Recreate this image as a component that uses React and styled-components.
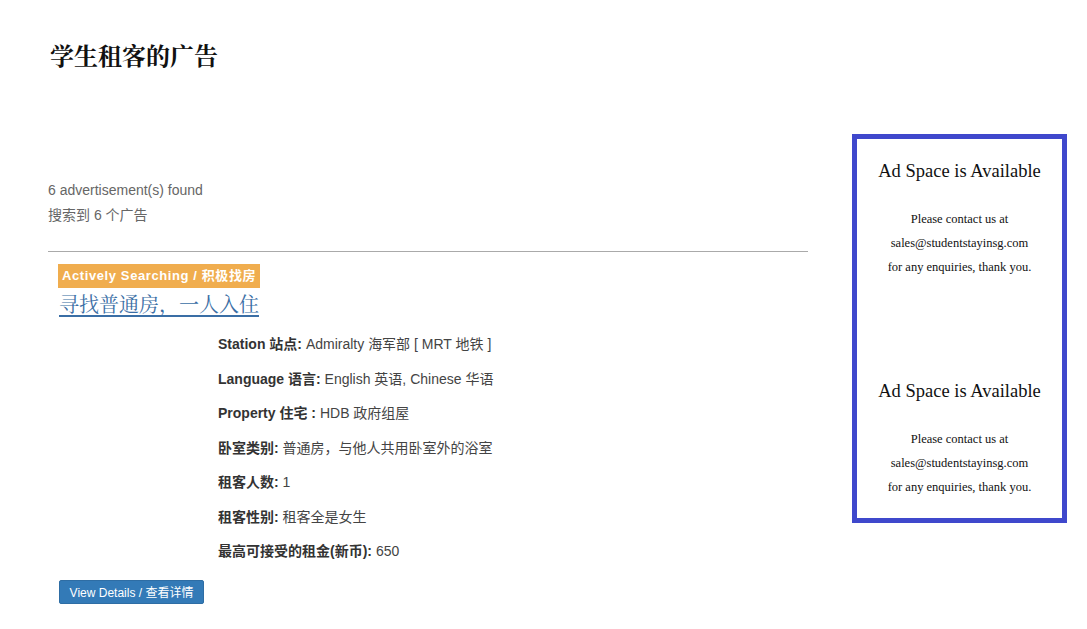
import React from "react";
import styled, { createGlobalStyle } from "styled-components";

const GlobalStyle = createGlobalStyle`
  body {
    margin: 0;
    background: #fff;
    font-family: "Liberation Sans", "Noto Sans CJK SC", sans-serif;
    color: #333;
  }
`;

const Page = styled.div`
  padding: 0 20px 0 48px;
`;

const PageTitle = styled.h1`
  margin: 40px 0 0 2px;
  font-family: "Noto Serif CJK SC", "Liberation Serif", "Noto Sans CJK SC", serif;
  font-size: 24px;
  line-height: 30px;
  font-weight: bold;
  color: #111;
`;

const Row = styled.div`
  display: flex;
  align-items: flex-start;
  margin-top: 64px;
`;

const Main = styled.main`
  width: 760px;
  padding-top: 44px;
`;

const Found = styled.div`
  font-size: 14px;
  line-height: 25px;
  color: #666;
`;

const Divider = styled.hr`
  margin: 23px 0 0;
  border: 0;
  border-top: 1px solid #aaa;
`;

const Listing = styled.article`
  padding: 12px 0 0 10px;
`;

const Badge = styled.span`
  display: inline-block;
  background: #f0ad4e;
  color: #fff;
  font-size: 13px;
  font-weight: bold;
  letter-spacing: 0.6px;
  line-height: 24px;
  padding: 0 4px;
`;

const ListingTitle = styled.a`
  display: block;
  width: max-content;
  margin-left: 1px;
  font-family: "Noto Serif CJK SC", "Liberation Serif", "Noto Sans CJK SC", serif;
  font-size: 20px;
  line-height: 32px;
  color: #3a6ea5;
  text-decoration: underline;
  text-underline-offset: 3px;
`;

const Details = styled.div`
  margin: 14px 0 0 160px;
`;

const Field = styled.p`
  margin: 0 0 14.5px;
  font-size: 14px;
  line-height: 20px;
  color: #444;

  b {
    color: #333;
  }
`;

const DetailsButton = styled.button`
  margin: 4px 0 0 1px;
  width: 145px;
  height: 24px;
  padding: 0;
  background: #337ab7;
  color: #fff;
  border: 1px solid #2e6da4;
  border-radius: 2px;
  font-family: "Liberation Sans", "Noto Sans CJK SC", sans-serif;
  font-size: 12px;
  cursor: pointer;
`;

const AdBox = styled.aside`
  box-sizing: border-box;
  width: 215px;
  height: 389px;
  margin-left: 44px;
  border: 5px solid #3f48cc;
  font-family: "Liberation Serif", serif;
  color: #111;
  text-align: center;
`;

const AdSlot = styled.div`
  height: 220px;
  padding-top: 20px;
  box-sizing: border-box;
`;

const AdTitle = styled.div`
  font-size: 18.5px;
  line-height: 24px;
`;

const AdText = styled.div`
  margin-top: 24px;
  font-size: 12.5px;
  line-height: 24px;
`;

const fields = [
  ["Station 站点:", "Admiralty 海军部 [ MRT 地铁 ]"],
  ["Language 语言:", "English 英语, Chinese 华语"],
  ["Property 住宅 :", "HDB 政府组屋"],
  ["卧室类别:", "普通房，与他人共用卧室外的浴室"],
  ["租客人数:", "1"],
  ["租客性别:", "租客全是女生"],
  ["最高可接受的租金(新币):", "650"],
];

const Ad = () => (
  <AdSlot>
    <AdTitle>Ad Space is Available</AdTitle>
    <AdText>
      Please contact us at
      <br />
      sales@studentstayinsg.com
      <br />
      for any enquiries, thank you.
    </AdText>
  </AdSlot>
);

export default function App() {
  return (
    <>
      <GlobalStyle />
      <Page>
        <PageTitle>学生租客的广告</PageTitle>
        <Row>
          <Main>
            <Found>6 advertisement(s) found</Found>
            <Found>搜索到 6 个广告</Found>
            <Divider />
            <Listing>
              <Badge>Actively Searching / 积极找房</Badge>
              <ListingTitle href="#">寻找普通房，一人入住</ListingTitle>
              <Details>
                {fields.map(([label, value]) => (
                  <Field key={label}>
                    <b>{label}</b> {value}
                  </Field>
                ))}
              </Details>
              <DetailsButton>View Details / 查看详情</DetailsButton>
            </Listing>
          </Main>
          <AdBox>
            <Ad />
            <Ad />
          </AdBox>
        </Row>
      </Page>
    </>
  );
}
